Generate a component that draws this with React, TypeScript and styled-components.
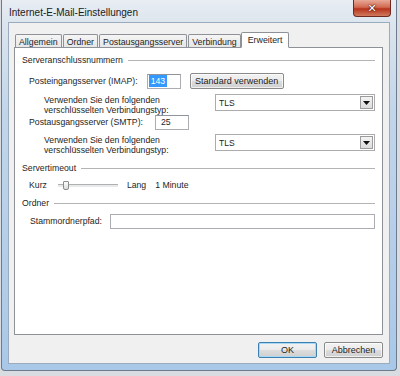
import styled, { createGlobalStyle } from 'styled-components';

const GlobalStyle = createGlobalStyle`
  html, body {
    margin: 0;
    padding: 0;
  }
  body {
    width: 400px;
    height: 376px;
    overflow: hidden;
    background: #d9dde2;
    font-family: 'Liberation Sans', Arial, sans-serif;
  }
`;

const Screen = styled.div`
  width: 400px;
  height: 376px;
  padding: 0 3px 5px 1px;
  box-sizing: border-box;
  display: flex;
`;

// Fensterrahmen (Aero-Glas)
const Window = styled.div`
  flex: 1;
  display: flex;
  flex-direction: column;
  border: 1px solid #6d7b8c;
  border-top: none;
  border-radius: 0 0 4px 4px;
  background: linear-gradient(
    to bottom,
    #e8edf3 0,
    #dde5ee 22px,
    #c2d6ea 110px,
    #a9c8e8 100%
  );
  padding: 0 6px 6px 6px;
`;

const TitleBar = styled.div`
  height: 22px;
  display: flex;
  align-items: center;
  justify-content: space-between;
`;

const TitleText = styled.span`
  font-size: 10px;
  color: #1a1a1a;
  padding-left: 1px;
  margin-top: 2px;
`;

const CloseButton = styled.div`
  align-self: flex-start;
  width: 38px;
  height: 17px;
  margin-right: -1px;
  box-sizing: border-box;
  border: 1px solid #6e2a20;
  border-top: none;
  border-radius: 0 0 4px 4px;
  background: linear-gradient(
    to bottom,
    #e8a998 0,
    #d26a52 45%,
    #b7331c 55%,
    #d07a5e 100%
  );
  display: flex;
  align-items: center;
  justify-content: center;
  color: #fff;
  font-family: 'DejaVu Sans', sans-serif;
  font-weight: bold;
  font-size: 11px;
  text-shadow: 0 0 2px #3a0d06, 0 0 1px #3a0d06;
`;

const Client = styled.div`
  flex: 1;
  display: flex;
  flex-direction: column;
  background: #f0f0f0;
  border: 1px solid #9aabbd;
  padding: 8px 6px 4px 5px;
  font-size: 8.7px;
  color: #1e1e1e;
`;

const TabRow = styled.div`
  display: flex;
  align-items: flex-end;
  padding-left: 1px;
  height: 16px;
  position: relative;
  z-index: 1;
`;

const Tab = styled.div<{ $active?: boolean }>`
  height: ${(p) => (p.$active ? '16px' : '13px')};
  box-sizing: border-box;
  padding: 0 ${(p) => (p.$active ? '6px' : '3px')};
  margin-right: ${(p) => (p.$active ? '0' : '1px')};
  margin-left: ${(p) => (p.$active ? '-1px' : '0')};
  border: 1px solid #8e9198;
  border-bottom: ${(p) => (p.$active ? '1px solid #fff' : 'none')};
  border-radius: 2px 2px 0 0;
  background: ${(p) =>
    p.$active ? '#fff' : 'linear-gradient(to bottom, #f5f5f5, #e6e6e6)'};
  display: flex;
  align-items: center;
  padding-top: ${(p) => (p.$active ? '0' : '1px')};
  font-size: 8.8px;
  margin-bottom: ${(p) => (p.$active ? '-1px' : '0')};
`;

const Panel = styled.div`
  height: 288px;
  box-sizing: border-box;
  background: #fff;
  border: 1px solid #8e9198;
  padding: 6px 7px 0 7px;
  display: flex;
  flex-direction: column;
`;

const GroupHeader = styled.div<{ $top?: number }>`
  display: flex;
  align-items: center;
  gap: 5px;
  height: 12px;
  margin-top: ${(p) => p.$top ?? 0}px;
  &::after {
    content: '';
    flex: 1;
    height: 1px;
    background: #b4b4b4;
    margin-top: 1px;
  }
`;

const Row = styled.div<{ $gap?: number; $top?: number }>`
  display: flex;
  align-items: center;
  gap: ${(p) => p.$gap ?? 9}px;
  margin-left: 7px;
  margin-top: ${(p) => p.$top ?? 0}px;
  height: 16px;
`;

const NumberBox = styled.div`
  width: 34px;
  height: 15px;
  box-sizing: border-box;
  border: 1px solid #abadb3;
  border-top-color: #8f939c;
  background: #fff;
  display: flex;
  align-items: center;
  padding-left: 1px;
`;

const Selected = styled.span`
  background: #3399ff;
  color: #fff;
  padding: 1px 2px;
`;

const PlainValue = styled.span`
  padding-left: 4px;
`;

const Button = styled.div<{ $width: number; $default?: boolean }>`
  width: ${(p) => p.$width}px;
  height: 16px;
  box-sizing: border-box;
  border: 1px solid ${(p) => (p.$default ? '#3c7fb1' : '#8a8a8a')};
  border-radius: 2px;
  background: linear-gradient(
    to bottom,
    #f2f2f2 0,
    #ebebeb 50%,
    #dddddd 51%,
    #cfcfcf 100%
  );
  box-shadow: inset 0 0 0 1px
    ${(p) => (p.$default ? '#a8d8f2' : 'rgba(255,255,255,0.7)')};
  display: flex;
  align-items: center;
  justify-content: center;
  font-size: 9px;
`;

const TypeBlock = styled.div<{ $top?: number }>`
  display: flex;
  align-items: flex-start;
  margin-top: ${(p) => p.$top ?? 0}px;
  padding-left: 22px;
  height: 21px;
`;

const TypeLabel = styled.div`
  width: 171px;
  line-height: 10px;
  padding-top: 1px;
`;

const Select = styled.div`
  flex: 1;
  height: 17px;
  box-sizing: border-box;
  border: 1px solid #acacac;
  background: #fff;
  display: flex;
  align-items: center;
  justify-content: space-between;
  padding: 0 1px 0 3px;
  font-size: 8.5px;
`;

const ArrowBox = styled.div`
  width: 13px;
  height: 13px;
  box-sizing: border-box;
  border: 1px solid #9c9c9c;
  background: linear-gradient(to bottom, #f4f4f4, #dcdcdc);
  display: flex;
  align-items: center;
  justify-content: center;
`;

const SliderTrack = styled.div`
  width: 60px;
  height: 2px;
  background: #e7eaea;
  border-top: 1px solid #b0b0b0;
  position: relative;
  margin: 0 3px 0 5px;
`;

const SliderThumb = styled.div`
  position: absolute;
  left: 5px;
  top: -4px;
  width: 4px;
  height: 7px;
  background: linear-gradient(to bottom, #fdfdfd, #dcdcdc);
  border: 1px solid #8c8c8c;
  border-radius: 1px 1px 2px 2px;
`;

const PathBox = styled.div`
  flex: 1;
  height: 15px;
  box-sizing: border-box;
  border: 1px solid #abadb3;
  background: #fff;
`;

const Footer = styled.div`
  display: flex;
  justify-content: flex-end;
  gap: 7px;
  margin-top: 7px;
`;

const Arrow = () => (
  <svg width='7' height='4' viewBox='0 0 7 4'>
    <path d='M0 0 H7 L3.5 4 Z' fill='#111' />
  </svg>
);

const App = () => {
  return (
    <>
      <GlobalStyle />
      <Screen>
        <Window>
          <TitleBar>
            <TitleText>Internet-E-Mail-Einstellungen</TitleText>
            <CloseButton>✕</CloseButton>
          </TitleBar>
          <Client>
            <TabRow>
              <Tab>Allgemein</Tab>
              <Tab>Ordner</Tab>
              <Tab>Postausgangsserver</Tab>
              <Tab>Verbindung</Tab>
              <Tab $active>Erweitert</Tab>
            </TabRow>
            <Panel>
              <GroupHeader>Serveranschlussnummern</GroupHeader>
              <Row $top={7}>
                <span>Posteingangsserver (IMAP):</span>
                <NumberBox>
                  <Selected>143</Selected>
                </NumberBox>
                <Button $width={94}>Standard verwenden</Button>
              </Row>
              <TypeBlock $top={5}>
                <TypeLabel>
                  Verwenden Sie den folgenden
                  <br />
                  verschlüsselten Verbindungstyp:
                </TypeLabel>
                <Select>
                  TLS
                  <ArrowBox>
                    <Arrow />
                  </ArrowBox>
                </Select>
              </TypeBlock>
              <Row $gap={12} $top={-1}>
                <span>Postausgangsserver (SMTP):</span>
                <NumberBox>
                  <PlainValue>25</PlainValue>
                </NumberBox>
              </Row>
              <TypeBlock $top={4}>
                <TypeLabel>
                  Verwenden Sie den folgenden
                  <br />
                  verschlüsselten Verbindungstyp:
                </TypeLabel>
                <Select>
                  TLS
                  <ArrowBox>
                    <Arrow />
                  </ArrowBox>
                </Select>
              </TypeBlock>
              <GroupHeader $top={7}>Servertimeout</GroupHeader>
              <Row $gap={6} $top={3}>
                <span>Kurz</span>
                <SliderTrack>
                  <SliderThumb />
                </SliderTrack>
                <span>Lang</span>
                <span style={{ marginLeft: 3 }}>1 Minute</span>
              </Row>
              <GroupHeader $top={4}>Ordner</GroupHeader>
              <Row $gap={8} $top={4}>
                <span style={{ marginLeft: 1 }}>Stammordnerpfad:</span>
                <PathBox />
              </Row>
            </Panel>
            <Footer>
              <Button $width={59} $default>
                OK
              </Button>
              <Button $width={59}>Abbrechen</Button>
            </Footer>
          </Client>
        </Window>
      </Screen>
    </>
  );
};

export default App;
